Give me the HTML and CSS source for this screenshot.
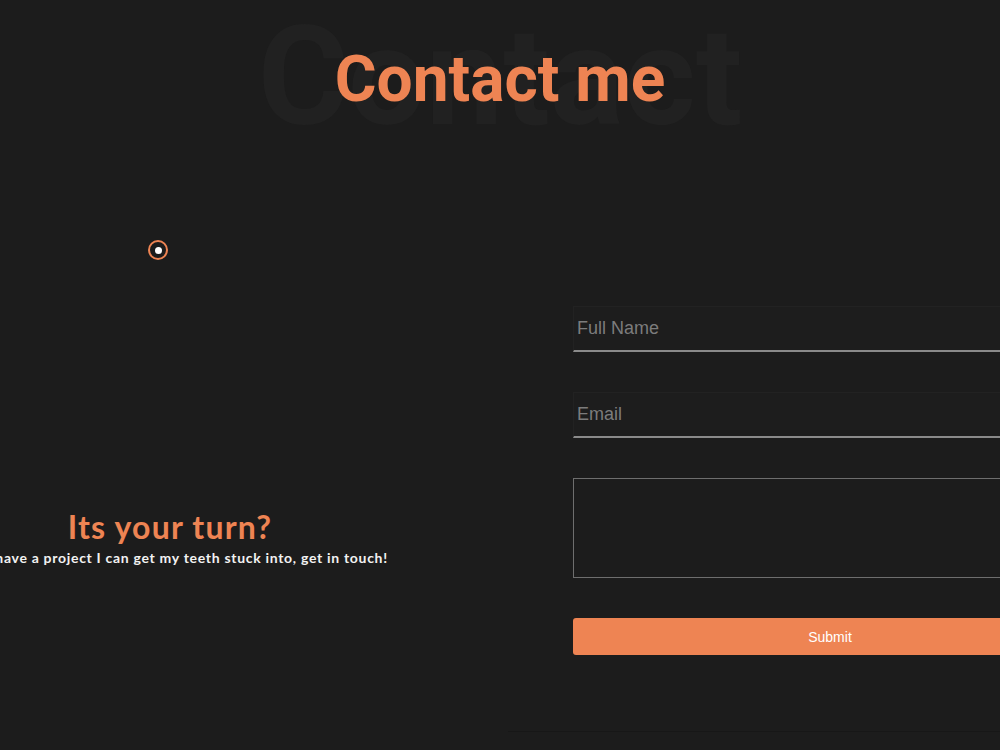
FILE: index.html
```html
<!DOCTYPE html>
<html>
<head>
<meta charset="utf-8">
<link rel="stylesheet" href="styles.css">
<title>Contact me</title>
</head>
<body>
<section class="contact">
  <header class="contact-head">
    <span class="ghost">Contact</span>
    <h1>Contact me</h1>
  </header>
  <div class="contact-body">
    <div class="intro">
      <span class="marker"></span>
      <h2>Its your turn?</h2>
      <p>If you have a project I can get my teeth stuck into, get in touch!</p>
    </div>
    <form class="contact-form">
      <input type="text" class="field" placeholder="Full Name">
      <input type="email" class="field" placeholder="Email">
      <textarea class="message"></textarea>
      <button type="button" class="submit">Submit</button>
    </form>
  </div>
  <div class="rule"></div>
</section>
</body>
</html>
```

FILE: styles.css
```css
html, body {
  margin: 0;
  height: 100%;
  background-color: #1c1c1c;
  overflow: hidden;
}
.contact {
  width: 1100px;
}
.contact-head {
  position: relative;
  width: 1000px;
  height: 140px;
  text-align: center;
}
.ghost {
  position: absolute;
  left: 0;
  right: 0;
  top: 8px;
  font-family: Roboto, sans-serif;
  font-weight: 700;
  font-size: 138px;
  line-height: 1;
  color: #212121;
}
.contact-head h1 {
  position: relative;
  margin: 0;
  padding-top: 48px;
  font-family: Roboto, sans-serif;
  font-weight: 700;
  font-size: 64px;
  line-height: 64px;
  color: #ee8453;
}
.contact-body {
  display: grid;
  grid-template-columns: 340px 514px;
  column-gap: 233px;
}
.intro {
  display: flex;
  flex-direction: column;
  align-items: center;
  padding-top: 100px;
}
.marker {
  align-self: flex-start;
  margin-left: 148px;
  width: 16px;
  height: 16px;
  border: 2px solid #ee8453;
  border-radius: 50%;
  display: flex;
  align-items: center;
  justify-content: center;
}
.marker::after {
  content: "";
  width: 7px;
  height: 7px;
  border-radius: 50%;
  background-color: #ffffff;
}
.intro h2 {
  margin: 249px 0 0;
  font-family: Lato, sans-serif;
  font-weight: 700;
  font-size: 32px;
  line-height: 36px;
  letter-spacing: 1.2px;
  color: #ee8453;
  white-space: nowrap;
}
.intro p {
  margin: 3px 0 0;
  font-family: Lato, sans-serif;
  font-weight: 700;
  font-size: 14px;
  line-height: 20px;
  letter-spacing: 0.7px;
  color: #f2f2f2;
  white-space: nowrap;
}
.contact-form {
  display: flex;
  flex-direction: column;
  gap: 40px;
  padding-top: 166px;
}
.field {
  box-sizing: border-box;
  height: 46px;
  margin: 0;
  padding: 0 3px;
  background-color: #1d1d1d;
  border: 1px solid #222222;
  border-bottom: 2px solid #8a8a8a;
  font-family: "Liberation Sans", Arial, sans-serif;
  font-size: 18px;
  color: #dddddd;
  outline: none;
}
.field::placeholder {
  color: #7c7c7c;
}
.message {
  box-sizing: border-box;
  height: 100px;
  margin: 0;
  background-color: #1c1c1c;
  border: 1px solid #6e6e6e;
  resize: none;
  outline: none;
}
.submit {
  height: 37px;
  margin: 0;
  border: none;
  border-radius: 3px;
  background-color: #ee8453;
  color: #ffffff;
  font-family: "Liberation Sans", Arial, sans-serif;
  font-size: 14px;
}
.rule {
  margin: 76px 0 0 508px;
  height: 0;
  border-top: 1px solid #171717;
}
```
